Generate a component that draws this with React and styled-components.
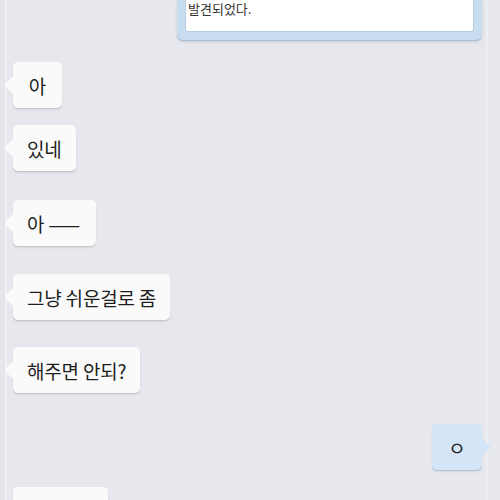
import React from 'react';
import styled, { createGlobalStyle } from 'styled-components';

const GlobalStyle = createGlobalStyle`
  html, body {
    margin: 0;
    padding: 0;
    background-color: #e6e8ee;
  }
  body {
    font-family: "Noto Sans CJK KR", "Noto Sans", sans-serif;
    color: #222;
  }
`

const Screen = styled.div`
  box-sizing: border-box;
  width: 500px;
  height: 500px;
  overflow: hidden;
  background-color: #e6e8ee;
  border-left: 5px solid #e4e6ec;
  display: flex;
  flex-direction: column;
`
const Column = styled.div`
  flex: 1;
  border-left: 2px solid #eef0f4;
  border-right: 2px solid #eceef2;
  margin-right: 12px;
  padding-left: 6px;
  padding-right: 4px;
  display: flex;
  flex-direction: column;
`
const NoticeCard = styled.div`
  align-self: flex-end;
  width: 305px;
  box-sizing: border-box;
  background-color: #c9ddf1;
  padding: 0 8px 8px 8px;
  border-radius: 0 0 6px 6px;
  box-shadow: 0 1px 0 #a9bcd0, 0 2px 3px rgba(0, 0, 0, 0.12);
`
const NoticeInner = styled.div`
  box-sizing: border-box;
  background-color: #fff;
  border: 1px solid #b9cde3;
  border-top: none;
  border-radius: 0 0 3px 3px;
  padding: 1px 8px 0 2px;
  height: 32px;
  font-size: 13px;
  line-height: 15px;
  color: #333;
`
const Row = styled.div`
  display: flex;
  justify-content: ${p => (p.$mine ? 'flex-end' : 'flex-start')};
  margin-top: ${p => p.$gap}px;
`
const Bubble = styled.div`
  position: relative;
  box-sizing: border-box;
  height: 46px;
  min-width: ${p => p.$minWidth || 0}px;
  padding: 0 14px;
  display: flex;
  align-items: center;
  justify-content: center;
  font-size: 19px;
  letter-spacing: -0.2px;
  color: #1e1e1e;
  border-radius: 5px;
  background-color: ${p => (p.$mine ? '#d4e5f7' : '#fafafa')};
  box-shadow: 0 1px 0 ${p => (p.$mine ? '#afc3d8' : '#c6c8cd')},
    0 2px 2px rgba(0, 0, 0, 0.08);

  &::before {
    content: '';
    position: absolute;
    top: 14px;
    ${p => (p.$mine ? 'right: -9px;' : 'left: -9px;')}
    border-top: 9px solid transparent;
    border-bottom: 9px solid transparent;
    ${p => (p.$mine
      ? 'border-left: 9px solid #d4e5f7;'
      : 'border-right: 9px solid #fafafa;')}
  }
`
const Label = styled.span`
  white-space: pre;
`
const Dash = styled.span`
  letter-spacing: 2px;
`

const messages = [
  { text: '아', gap: 22, minWidth: 49 },
  { text: '있네', gap: 17 },
  { text: <>아 <Dash>——</Dash></>, gap: 29 },
  { text: '그냥 쉬운걸로 좀', gap: 28 },
  { text: '해주면 안되?', gap: 27 },
  { text: 'ㅇ', gap: 31, mine: true, minWidth: 50 },
  { text: '', gap: 17, minWidth: 95 },
]

const App = () => (
  <>
    <GlobalStyle />
    <Screen>
      <Column>
        <NoticeCard>
          <NoticeInner>발견되었다.</NoticeInner>
        </NoticeCard>
        {messages.map((m, i) => (
          <Row key={i} $gap={m.gap} $mine={m.mine}>
            <Bubble $mine={m.mine} $minWidth={m.minWidth}>
              <Label>{m.text}</Label>
            </Bubble>
          </Row>
        ))}
      </Column>
    </Screen>
  </>
)

export default App;
